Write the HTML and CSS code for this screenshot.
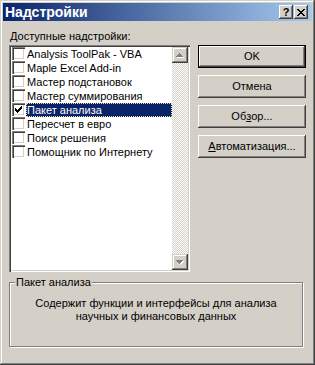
FILE: index.html
```html
<!DOCTYPE html>
<html lang="ru">
<head>
<meta charset="utf-8">
<title>Надстройки</title>
<link rel="stylesheet" href="styles.css">
</head>
<body>
<div class="window">
  <div class="titlebar">
    <span class="title">Надстройки</span>
    <div class="caption-buttons">
      <div class="cap-btn help">?</div>
      <div class="cap-btn close">
        <svg width="8" height="7" viewBox="0 0 8 7" shape-rendering="crispEdges"><path fill="#000" d="M0 0h2v1h-2z M6 0h2v1h-2z M1 1h2v1h-2z M5 1h2v1h-2z M2 2h4v1h-4z M3 3h2v1h-2z M2 4h4v1h-4z M1 5h2v1h-2z M5 5h2v1h-2z M0 6h2v1h-2z M6 6h2v1h-2z"/></svg>
      </div>
    </div>
  </div>
  <div class="client">
    <div class="top">
      <div class="left">
        <div class="label"><u>Д</u>оступные надстройки:</div>
        <div class="listbox">
          <ul class="items">
            <li class="item"><span class="check"></span><span class="text">Analysis ToolPak - VBA</span></li>
            <li class="item"><span class="check"></span><span class="text">Maple Excel Add-in</span></li>
            <li class="item"><span class="check"></span><span class="text">Мастер подстановок</span></li>
            <li class="item"><span class="check"></span><span class="text">Мастер суммирования</span></li>
            <li class="item selected"><span class="check"><svg width="7" height="7" viewBox="0 0 7 7" shape-rendering="crispEdges"><path fill="#000" d="M6 0h1v1h-1z M5 1h2v1h-2z M0 2h1v1h-1z M4 2h3v1h-3z M0 3h2v1h-2z M3 3h3v1h-3z M0 4h5v1h-5z M1 5h3v1h-3z M2 6h1v1h-1z"/></svg></span><span class="text">Пакет анализа</span></li>
            <li class="item"><span class="check"></span><span class="text">Пересчет в евро</span></li>
            <li class="item"><span class="check"></span><span class="text">Поиск решения</span></li>
            <li class="item"><span class="check"></span><span class="text">Помощник по Интернету</span></li>
          </ul>
          <div class="scrollbar">
            <div class="sb-btn">
              <svg width="8" height="5" viewBox="0 0 8 5" shape-rendering="crispEdges"><path fill="#fff" d="M4 1h1v1h-1z M3 2h3v1h-3z M2 3h5v1h-5z M1 4h7v1h-7z"/><path fill="#808080" d="M3 0h1v1h-1z M2 1h3v1h-3z M1 2h5v1h-5z M0 3h7v1h-7z"/></svg>
            </div>
            <div class="sb-track"></div>
            <div class="sb-btn">
              <svg width="8" height="5" viewBox="0 0 8 5" shape-rendering="crispEdges"><path fill="#fff" d="M1 1h7v1h-7z M2 2h5v1h-5z M3 3h3v1h-3z M4 4h1v1h-1z"/><path fill="#808080" d="M0 0h7v1h-7z M1 1h5v1h-5z M2 2h3v1h-3z M3 3h1v1h-1z"/></svg>
            </div>
          </div>
        </div>
      </div>
      <div class="buttons">
        <div class="btn default"><span class="btn-face">OK</span></div>
        <div class="btn"><span class="btn-face">Отмена</span></div>
        <div class="btn"><span class="btn-face">Об<u>з</u>ор...</span></div>
        <div class="btn"><span class="btn-face"><u>А</u>втоматизация...</span></div>
      </div>
    </div>
    <fieldset class="group">
      <legend class="group-title">Пакет анализа</legend>
      <p class="desc">Содержит функции и интерфейсы для анализа<br>научных и финансовых данных</p>
    </fieldset>
  </div>
</div>
</body>
</html>
```

FILE: styles.css
```css
* { box-sizing: border-box; }
html, body { margin: 0; padding: 0; background: #d4d0c8; }
body {
  font-family: "Liberation Sans", Arial, sans-serif;
  font-size: 11px;
  line-height: 13px;
  color: #000;
}
.window {
  width: 315px;
  height: 365px;
  padding: 3px;
  background: #d4d0c8;
  box-shadow: inset -1px -1px #404040, inset 1px 1px #d4d0c8, inset -2px -2px #808080, inset 2px 2px #fff;
  display: flex;
  flex-direction: column;
}
.titlebar {
  height: 18px;
  flex: none;
  display: flex;
  align-items: center;
  justify-content: space-between;
  padding: 0 4px 0 2px;
  background: linear-gradient(to right, #0a246a, #a6caf0);
}
.title { color: #fff; font-weight: bold; font-size: 14px; line-height: 16px; }
.caption-buttons { display: flex; gap: 1px; }
.cap-btn {
  width: 14px;
  height: 14px;
  background: #d4d0c8;
  box-shadow: inset -1px -1px #404040, inset 1px 1px #fff, inset -2px -2px #808080;
  display: flex;
  align-items: center;
  justify-content: center;
  font-weight: bold;
  font-size: 11px;
  line-height: 12px;
  padding-bottom: 1px;
}
.close svg { display: block; margin-top: 1px; }
.client {
  flex: 1;
  padding: 9px 6px 0 6px;
  display: flex;
  flex-direction: column;
}
.top { display: flex; gap: 8px; }
.left { width: 181px; display: flex; flex-direction: column; gap: 2px; }
.label { height: 13px; padding-left: 1px; }
.listbox {
  height: 227px;
  display: flex;
  background: #fff;
  padding: 2px;
  box-shadow: inset 1px 1px #808080, inset 2px 2px #404040, inset -1px -1px #fff, inset -2px -2px #d4d0c8;
}
.items { flex: 1; list-style: none; margin: 0; padding: 0; }
.item { height: 14px; display: flex; align-items: flex-start; }
.check {
  width: 13px;
  height: 13px;
  flex: none;
  margin-left: 1px;
  background: #fff;
  box-shadow: inset 1px 1px #808080, inset 2px 2px #404040, inset -1px -1px #fff, inset -2px -2px #d4d0c8;
  display: flex;
  align-items: flex-start;
  justify-content: flex-start;
  padding: 3px 0 0 3px;
}
.check svg { display: block; }
.text {
  flex: 1;
  height: 14px;
  margin-left: 1px;
  padding-left: 1px;
  line-height: 14px;
  white-space: nowrap;
}
.item.selected .text {
  background: #0a246a;
  color: #fff;
  outline: 1px dotted #f5db95;
  outline-offset: -1px;
}
.scrollbar { width: 16px; flex: none; display: flex; flex-direction: column; }
.sb-btn {
  width: 16px;
  height: 16px;
  flex: none;
  background: #d4d0c8;
  box-shadow: inset -1px -1px #404040, inset 1px 1px #d4d0c8, inset -2px -2px #808080, inset 2px 2px #fff;
  display: flex;
  align-items: center;
  justify-content: center;
}
.sb-btn svg { display: block; }
.sb-track {
  flex: 1;
  background: repeating-conic-gradient(#fff 0 25%, #d4d0c8 0 50%) 0 0 / 2px 2px;
}
.buttons {
  width: 108px;
  padding-top: 15px;
  display: flex;
  flex-direction: column;
  gap: 7px;
}
.btn {
  height: 23px;
  display: flex;
  background: #d4d0c8;
  box-shadow: inset -1px -1px #404040, inset 1px 1px #fff, inset -2px -2px #808080;
}
.btn-face {
  flex: 1;
  display: flex;
  align-items: center;
  justify-content: center;
}
.btn.default {
  border: 1px solid #000;
  box-shadow: none;
}
.btn.default .btn-face {
  box-shadow: inset -1px -1px #404040, inset 1px 1px #fff, inset -2px -2px #808080;
}
.group {
  margin: 4px 0 0 0;
  width: 294px;
  height: 71px;
  padding: 8px 0 0 0;
  border: 1px solid #808080;
  box-shadow: inset 1px 1px #fff, 1px 1px #fff;
  min-inline-size: 0;
}
.group-title {
  margin-left: 5px;
  padding: 0 1px;
  background: #d4d0c8;
  line-height: 13px;
}
.desc { margin: 0; text-align: center; }
```
